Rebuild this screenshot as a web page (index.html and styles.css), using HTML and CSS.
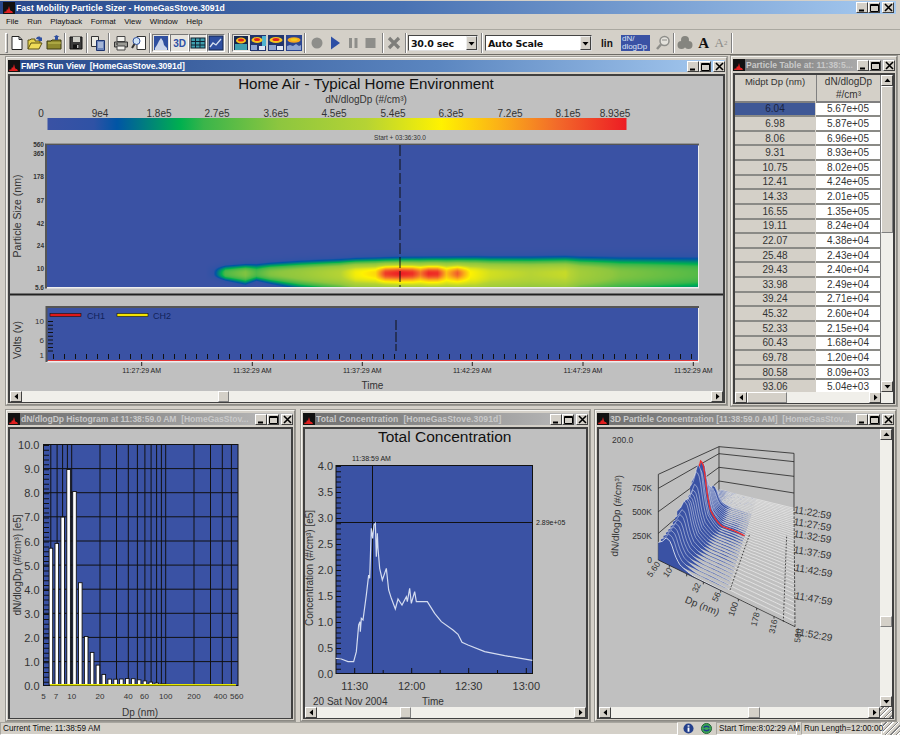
FILE: index.html
```html
<!DOCTYPE html>
<html lang="en">
<head>
<meta charset="utf-8">
<title>Fast Mobility Particle Sizer - HomeGasStove.3091d</title>
<link rel="stylesheet" href="styles.css">
</head>
<body>
<svg class="defs" width="0" height="0" aria-hidden="true">
  <defs>
    <symbol id="appicon" viewBox="0 0 12 12"><rect width="12" height="12" fill="#111"/><path d="M1 11l1-2 1 1 1-3 1 1 1-4 1 4 1 1 1 0 1 2z" fill="#e02020"/></symbol>
    <symbol id="wmin" viewBox="0 0 9 9"><rect x="1" y="6.5" width="5" height="2" fill="#000"/></symbol>
    <symbol id="wmax" viewBox="0 0 9 9"><path d="M.5 1.5h8v7h-8zM.5 2.5h8" fill="none" stroke="#000"/></symbol>
    <symbol id="wclose" viewBox="0 0 9 9"><path d="M1 1l7 7M8 1l-7 7" stroke="#000" stroke-width="1.6"/></symbol>
    <symbol id="aup" viewBox="0 0 7 7"><path d="M3.5 1.5L6.5 5H.5z" fill="#000"/></symbol>
    <symbol id="adn" viewBox="0 0 7 7"><path d="M3.5 5.5L.5 2h6z" fill="#000"/></symbol>
    <symbol id="alt" viewBox="0 0 7 7"><path d="M1.5 3.5L5 .5v6z" fill="#000"/></symbol>
    <symbol id="art" viewBox="0 0 7 7"><path d="M5.5 3.5L2 .5v6z" fill="#000"/></symbol>
    <symbol id="heat-a" viewBox="0 0 16 16"><rect width="16" height="16" fill="#22356e"/><rect x="12" y="1" width="4" height="10" fill="#4fb3d0"/><ellipse cx="7" cy="5" rx="5.500" ry="3" fill="#f7c41d"/><ellipse cx="7" cy="4.500" rx="3" ry="1.600" fill="#e02020"/><rect x="1" y="10" width="6" height="5" fill="#8ea4d0"/><rect x="9" y="11" width="6" height="4" fill="#dfe7f5"/></symbol>
    <symbol id="heat-b" viewBox="0 0 16 16"><rect width="16" height="16" fill="#22356e"/><ellipse cx="8" cy="5" rx="6.500" ry="3" fill="#f7c41d"/><ellipse cx="8" cy="4.500" rx="3.500" ry="1.600" fill="#e02020"/><rect x="1" y="10" width="7" height="5" fill="#8ea4d0"/><rect x="9" y="11" width="6" height="4" fill="#dfe7f5"/></symbol>
    <symbol id="heat-c" viewBox="0 0 16 16"><rect width="16" height="16" fill="#2b4590"/><ellipse cx="8" cy="5" rx="6.500" ry="2.800" fill="#f7a81d"/><ellipse cx="8" cy="4.500" rx="3.500" ry="1.300" fill="#f0d020"/><path d="M1 15V11l3-1 3 1 3-2 3 2 2-1v5z" fill="#8ea4d0"/></symbol>
  </defs>
</svg>

<div class="app">
  <header class="apptitle">
    <svg class="tico"><use href="#appicon"/></svg>
    <span class="tname">Fast Mobility Particle Sizer - HomeGasStove.3091d</span>
    <div class="wbtns">
      <button class="wbtn"><svg><use href="#wmin"/></svg></button>
      <button class="wbtn"><svg><use href="#wmax"/></svg></button>
      <button class="wbtn wclose"><svg><use href="#wclose"/></svg></button>
    </div>
  </header>

  <nav class="menu">
    <span>File</span><span>Run</span><span>Playback</span><span>Format</span><span>View</span><span>Window</span><span>Help</span>
  </nav>

  <div class="toolbar">
    <i class="grip"></i>
    <span class="tb"><svg viewBox="0 0 16 16"><path d="M3 1.5h7l3 3v10H3z" fill="#fff" stroke="#222"/><path d="M10 1.5v3h3" fill="none" stroke="#222"/></svg></span>
    <span class="tb"><svg viewBox="0 0 16 16"><path d="M1 14V5h2l1-1h4v2h5v2" fill="#e8d44d" stroke="#5c5214"/><path d="M1 14l3-6h11l-3 6z" fill="#f0dc58" stroke="#5c5214"/><path d="M9 4c1-3 4-3 5-1l1-1v4h-4l1-1c-1-1-2-1-3-1z" fill="#2f4f9f"/></svg></span>
    <span class="tb"><svg viewBox="0 0 16 16"><path d="M1 14V6h4l1-1h9v9z" fill="#8f8a2e" stroke="#3d3a10"/><path d="M2 8h13" stroke="#c8c458"/><path d="M9 5V2h-1.500l3-2 3 2H12v3z" fill="#2f4f9f"/></svg></span>
    <i class="sep"></i>
    <span class="tb"><svg viewBox="0 0 16 16"><path d="M2 2h12v12H2z" fill="#3c3c3c" stroke="#111"/><rect x="5" y="2" width="7" height="5" fill="#cfcfc8"/><rect x="5" y="9.500" width="6" height="4.500" fill="#111"/><rect x="9" y="10" width="1.500" height="3" fill="#bbb"/></svg></span>
    <i class="sep"></i>
    <span class="tb"><svg viewBox="0 0 16 16"><path d="M1.500 1.500h7v10h-7z" fill="#ecebe4" stroke="#333"/><path d="M6.500 5.500h8v10h-8z" fill="#6d86bb" stroke="#1e3570"/><path d="M8 8h5M8 10h5M8 12h5" stroke="#dfe6f2"/></svg></span>
    <i class="sep"></i>
    <span class="tb"><svg viewBox="0 0 16 16"><path d="M4 1.500h8v5H4z" fill="#f2f1ec" stroke="#444"/><path d="M1.500 7h13v5h-13z" fill="#9a9a94" stroke="#333"/><path d="M4 11h8v4H4z" fill="#f2f1ec" stroke="#444"/><path d="M3 9h2" stroke="#222"/></svg></span>
    <span class="tb"><svg viewBox="0 0 16 16"><path d="M6 1.500h8.500v13H6z" fill="#fff" stroke="#333"/><circle cx="5.500" cy="6" r="3.500" fill="#cfe3f5" stroke="#2f4f9f"/><path d="M3.500 9L1 13" stroke="#333" stroke-width="2"/></svg></span>
    <i class="sep"></i>
    <span class="tb tb-on"><svg viewBox="0 0 16 16"><rect x="1" y="1" width="14" height="14" fill="#2f4f9f"/><path d="M2 15V13l2-3 2-4 2-3 2 3 1 4 3 3v2z" fill="#c9d3e8"/></svg></span>
    <span class="tb tb-on tb-3d">3D</span>
    <span class="tb tb-on"><svg viewBox="0 0 16 16"><rect x="1" y="3" width="14" height="10" fill="#3f9fae" stroke="#123"/><path d="M5.500 3v10M10 3v10M1 6.500h14M1 10h14" stroke="#123"/></svg></span>
    <span class="tb tb-on"><svg viewBox="0 0 16 16"><rect x="1" y="1" width="14" height="14" fill="#2f4f9f" stroke="#14264e"/><path d="M2 12l3-4 3 2 5-6" fill="none" stroke="#d5dff0" stroke-width="1.300"/></svg></span>
    <i class="sep sep-w"></i>
    <span class="tb tb-on"><svg viewBox="0 0 16 16"><rect x="1" y="1" width="14" height="14" fill="#14264e"/><rect x="2" y="9" width="12" height="6" fill="#3f9fae"/><ellipse cx="8" cy="5.500" rx="5" ry="3" fill="#f7c41d"/><ellipse cx="8" cy="5" rx="3" ry="1.600" fill="#e02020"/></svg></span>
    <span class="tb tb-pull"><svg><use href="#heat-a"/></svg></span>
    <span class="tb"><svg><use href="#heat-b"/></svg></span>
    <span class="tb"><svg><use href="#heat-c"/></svg></span>
    <i class="sep"></i>
    <span class="tb"><svg viewBox="0 0 16 16"><circle cx="8" cy="8" r="5.500" fill="#8e8e8a"/></svg></span>
    <span class="tb"><svg viewBox="0 0 16 16"><path d="M4 1.500l9 6.500-9 6.500z" fill="#2d4fa5"/></svg></span>
    <span class="tb"><svg viewBox="0 0 16 16"><path d="M4 3h3v10H4zM9.500 3h3v10h-3z" fill="#8e8e8a"/></svg></span>
    <span class="tb"><svg viewBox="0 0 16 16"><rect x="2.500" y="3" width="10" height="10" fill="#8e8e8a"/></svg></span>
    <i class="sep"></i>
    <span class="tb"><svg viewBox="0 0 16 16"><path d="M3 3l10 10M13 3L3 13" stroke="#7e7e7a" stroke-width="3.200"/></svg></span>
    <i class="sep sep-n"></i>
    <div class="combo combo-time"><span>30.0 sec</span><b class="sbtn"><svg><use href="#adn"/></svg></b></div>
    <i class="sep sep-w"></i>
    <div class="combo combo-scale"><span>Auto Scale</span><b class="sbtn"><svg><use href="#adn"/></svg></b></div>
    <span class="tb tb-lin">lin</span>
    <span class="dlog">dN/<br>dlogDp</span>
    <span class="tb tb-find"><svg viewBox="0 0 16 16"><circle cx="9.500" cy="6" r="4.500" fill="#e4e2dc" stroke="#8e8e8a" stroke-width="1.500"/><path d="M6 9.500L2 14" stroke="#8e8e8a" stroke-width="2.500"/><path d="M7 5h5" stroke="#8e8e8a"/></svg></span>
    <i class="sep"></i>
    <span class="tb"><svg viewBox="0 0 16 16"><circle cx="8" cy="5" r="4" fill="#85857f"/><circle cx="4.500" cy="10" r="4" fill="#85857f"/><circle cx="11.500" cy="10" r="4" fill="#85857f"/></svg></span>
    <span class="tb tb-a">A</span>
    <span class="tb tb-a2">A<sup>2</sup></span>
    <i class="sep"></i>
  </div>

  <main class="workspace">

    <!-- Run view -->
    <section class="win win-run">
      <header class="tbar tbar-active tight">
        <svg class="tico"><use href="#appicon"/></svg><span class="tname">FMPS Run View&nbsp; [HomeGasStove.3091d]</span>
        <div class="wbtns"><button class="wbtn"><svg><use href="#wmin"/></svg></button><button class="wbtn"><svg><use href="#wmax"/></svg></button><button class="wbtn wclose"><svg><use href="#wclose"/></svg></button></div>
      </header>
      <div class="body">
        <div class="chart chart-run">
          <svg width="713" height="315" viewBox="10 76 713 315">
            <text class="t15" x="366" y="89" text-anchor="middle">Home Air - Typical Home Environment</text>
            <text class="t10" x="366" y="103" text-anchor="middle">dN/dlogDp (#/cm³)</text>
            <g class="t10" text-anchor="middle">
              <text x="41" y="117">0</text><text x="100" y="117">9e4</text><text x="159" y="117">1.8e5</text><text x="217" y="117">2.7e5</text><text x="276" y="117">3.6e5</text><text x="334" y="117">4.5e5</text><text x="393" y="117">5.4e5</text><text x="451" y="117">6.3e5</text><text x="510" y="117">7.2e5</text><text x="568" y="117">8.1e5</text><text x="615" y="117">8.93e5</text>
            </g>
            <defs>
              <linearGradient id="scale">
                <stop offset="0" stop-color="#3a52a4"/><stop offset=".08" stop-color="#2f52a5"/><stop offset=".12" stop-color="#0055a5"/><stop offset=".23" stop-color="#00b04f"/><stop offset=".27" stop-color="#3ab54a"/><stop offset=".4" stop-color="#8dc63f"/><stop offset=".55" stop-color="#b5d334"/><stop offset=".68" stop-color="#fff200"/><stop offset=".78" stop-color="#fbb117"/><stop offset=".88" stop-color="#f26a2a"/><stop offset="1" stop-color="#ed1c24"/>
              </linearGradient>
            </defs>
            <rect x="47.500" y="118" width="579" height="12" fill="url(#scale)"/>
            <text class="t6" x="400" y="140" text-anchor="middle">Start + 03:36:30.0</text>

            <rect x="46" y="143.500" width="653" height="145" fill="#eee"/>
            <path d="M46 288.500V144.500H699" fill="none" stroke="#555" stroke-width="2"/>
            <g class="t7b" text-anchor="end">
              <text x="44" y="147">560</text><text x="44" y="156">365</text><text x="44" y="179">178</text><text x="44" y="203">87</text><text x="44" y="226">42</text><text x="44" y="248">24</text><text x="44" y="271">10</text><text x="44" y="290">5.6</text>
            </g>
            <text class="t11" transform="translate(21 216) rotate(-90)" text-anchor="middle">Particle Size (nm)</text>

            <path d="M8 294.500H725" stroke="#222" stroke-width="2"/>

            <rect x="46" y="306.500" width="653" height="56" fill="#eee"/>
            <rect x="47" y="308" width="651" height="53" fill="#3a52a4"/>
            <path d="M46.500 362V307H699" fill="none" stroke="#555" stroke-width="2"/>
            <path d="M48 360.500H698" stroke="#e23a3a"/>
            <path d="M53 356.500H698" stroke="#111" stroke-width="5" stroke-dasharray="1 10"/>
            <path d="M50.500 321V354" stroke="#111" stroke-width="5" stroke-dasharray="1 2.700"/>
            <path d="M396 320V351" stroke="#111" stroke-dasharray="10 2"/>
            <rect x="50" y="313.500" width="31" height="3" fill="#e01818" stroke="#111" stroke-width=".6"/>
            <rect x="117" y="313.500" width="31" height="3" fill="#f4e400" stroke="#111" stroke-width=".6"/>
            <text class="tleg" x="87" y="319">CH1</text><text class="tleg" x="153" y="319">CH2</text>
            <g class="t8" text-anchor="end"><text x="44" y="324">10</text><text x="44" y="343">6</text><text x="44" y="358">1</text></g>
            <text class="t11" transform="translate(21 340) rotate(-90)" text-anchor="middle">Volts (v)</text>
            <path d="M141.700 362v4M252.300 362v4M362.300 362v4M472.300 362v4M583 362v4M693.300 362v4" stroke="#222"/>
            <g class="t7" text-anchor="middle">
              <text x="141.700" y="373">11:27:29 AM</text><text x="252.300" y="373">11:32:29 AM</text><text x="362.300" y="373">11:37:29 AM</text><text x="472.300" y="373">11:42:29 AM</text><text x="583" y="373">11:47:29 AM</text><text x="693.300" y="373">11:52:29 AM</text>
            </g>
            <text class="t10" x="372.500" y="389" text-anchor="middle">Time</text>
          </svg>
          <canvas id="heat" class="heat" width="651" height="142"></canvas>
          <svg class="heat" width="651" height="142" viewBox="47 145 651 142"><path d="M400 145V287" stroke="#111" stroke-dasharray="11 3"/></svg>
        </div>
        <div class="hscroll">
          <button class="sb"><svg><use href="#alt"/></svg></button>
          <div class="track"><i class="thumb thumb-run"></i></div>
          <button class="sb"><svg><use href="#art"/></svg></button>
        </div>
      </div>
    </section>

    <!-- Particle table -->
    <section class="win win-table">
      <header class="tbar tbar-idle wide">
        <svg class="tico"><use href="#appicon"/></svg><span class="tname">Particle Table at: 11:38:5...</span>
        <div class="wbtns"><button class="wbtn"><svg><use href="#wmin"/></svg></button><button class="wbtn"><svg><use href="#wmax"/></svg></button><button class="wbtn wclose"><svg><use href="#wclose"/></svg></button></div>
      </header>
      <div class="body body-table">
        <div class="ptable">
          <div class="th th1">Midpt Dp (nm)</div>
          <div class="th th2"><span>dN/dlogDp</span><span>#/cm³</span></div>
          <div class="c1 sel">6.04</div><div class="c2">5.67e+05</div>
          <div class="c1">6.98</div><div class="c2">5.87e+05</div>
          <div class="c1">8.06</div><div class="c2">6.96e+05</div>
          <div class="c1">9.31</div><div class="c2">8.93e+05</div>
          <div class="c1">10.75</div><div class="c2">8.02e+05</div>
          <div class="c1">12.41</div><div class="c2">4.24e+05</div>
          <div class="c1">14.33</div><div class="c2">2.01e+05</div>
          <div class="c1">16.55</div><div class="c2">1.35e+05</div>
          <div class="c1">19.11</div><div class="c2">8.24e+04</div>
          <div class="c1">22.07</div><div class="c2">4.38e+04</div>
          <div class="c1">25.48</div><div class="c2">2.43e+04</div>
          <div class="c1">29.43</div><div class="c2">2.40e+04</div>
          <div class="c1">33.98</div><div class="c2">2.49e+04</div>
          <div class="c1">39.24</div><div class="c2">2.71e+04</div>
          <div class="c1">45.32</div><div class="c2">2.60e+04</div>
          <div class="c1">52.33</div><div class="c2">2.15e+04</div>
          <div class="c1">60.43</div><div class="c2">1.68e+04</div>
          <div class="c1">69.78</div><div class="c2">1.20e+04</div>
          <div class="c1">80.58</div><div class="c2">8.09e+03</div>
          <div class="c1">93.06</div><div class="c2">5.04e+03</div>
        </div>
        <div class="vscroll">
          <button class="sb"><svg><use href="#aup"/></svg></button>
          <div class="track vtrack"><i class="thumb thumb-tablev"></i></div>
          <button class="sb"><svg><use href="#adn"/></svg></button>
        </div>
        <div class="hscroll">
          <button class="sb"><svg><use href="#alt"/></svg></button>
          <div class="track"><i class="thumb thumb-tableh"></i></div>
          <button class="sb"><svg><use href="#art"/></svg></button>
        </div>
      </div>
    </section>

    <!-- Histogram -->
    <section class="win win-hist">
      <header class="tbar tbar-idle tight">
        <svg class="tico"><use href="#appicon"/></svg><span class="tname">dN/dlogDp Histogram at 11:38:59.0 AM&nbsp; [HomeGasStov...</span>
        <div class="wbtns"><button class="wbtn"><svg><use href="#wmin"/></svg></button><button class="wbtn"><svg><use href="#wmax"/></svg></button><button class="wbtn wclose"><svg><use href="#wclose"/></svg></button></div>
      </header>
      <div class="body">
        <svg class="fill" width="281" height="288" viewBox="10 429 281 288">
          <rect x="43.500" y="444.500" width="194.500" height="241" fill="#3a52a4" stroke="#111"/>
          <path d="M43 468.600H238M43 492.700H238M43 516.800H238M43 541H238M43 565.100H238M43 589.200H238M43 613.300H238M43 637.400H238M43 661.600H238" stroke="#111"/>
          <path d="M50.800 445V685M57.100 445V685M62.600 445V685M67.400 445V685M71.700 445V685M100 445V685M116.500 445V685M128.300 445V685M137.400 445V685M144.900 445V685M151.100 445V685M156.600 445V685M161.400 445V685M165.700 445V685M194 445V685M210.500 445V685M222.300 445V685M231.400 445V685" stroke="#111"/>
          <path d="M46.500 445V686" stroke="#111" stroke-width="5" stroke-dasharray="1 3.830"/>
          <g id="bars"></g>
          <path d="M50 684.800H236" stroke="#e8e800" stroke-width="1.500"/>
          <g class="t11n" text-anchor="end">
            <text x="39.500" y="449">10.0</text><text x="39.500" y="473">9.0</text><text x="39.500" y="497">8.0</text><text x="39.500" y="521">7.0</text><text x="39.500" y="545.500">6.0</text><text x="39.500" y="569.500">5.0</text><text x="39.500" y="593.500">4.0</text><text x="39.500" y="617.500">3.0</text><text x="39.500" y="642">2.0</text><text x="39.500" y="666">1.0</text><text x="39.500" y="690">0.0</text>
          </g>
          <g class="t8" text-anchor="middle">
            <text x="43.500" y="699">5</text><text x="56" y="699">7</text><text x="71.700" y="699">10</text><text x="100" y="699">20</text><text x="128.300" y="699">40</text><text x="144.500" y="699">60</text><text x="165.700" y="699">100</text><text x="194" y="699">200</text><text x="220.500" y="699">400</text><text x="236.700" y="699">560</text>
          </g>
          <text class="t10" transform="translate(21 565) rotate(-90)" text-anchor="middle">dN/dlogDp (#/cm³) [e5]</text>
          <text class="t10" x="140" y="716" text-anchor="middle">Dp (nm)</text>
        </svg>
      </div>
    </section>

    <!-- Total concentration -->
    <section class="win win-total">
      <header class="tbar tbar-idle">
        <svg class="tico"><use href="#appicon"/></svg><span class="tname">Total Concentration&nbsp; [HomeGasStove.3091d]</span>
        <div class="wbtns"><button class="wbtn"><svg><use href="#wmin"/></svg></button><button class="wbtn"><svg><use href="#wmax"/></svg></button><button class="wbtn wclose"><svg><use href="#wclose"/></svg></button></div>
      </header>
      <div class="body">
        <svg class="fill-s" width="281" height="278" viewBox="305 429 281 278">
          <text class="t155" x="444.700" y="442" text-anchor="middle">Total Concentration</text>
          <text class="t7" x="371.500" y="460.500" text-anchor="middle">11:38:59 AM</text>
          <rect x="336" y="465.500" width="196.500" height="208" fill="#3a52a4" stroke="#111"/>
          <path d="M372.500 466V673M336 522.500H532" stroke="#111"/>
          <path d="M338.500 466V674" stroke="#111" stroke-width="5" stroke-dasharray="1 4.200"/>
          <path d="M354.700 668V674M411.700 668V674M468.700 668V674M526.300 668V674" stroke="#111"/>
          <path d="M383.200 670V674M440.200 670V674M497.500 670V674" stroke="#111"/>
          <g transform="translate(298 405) scale(.33333)">
            <polyline fill="none" stroke="#d5ddf0" stroke-width="3.600" points="113,760 130,762 150,770 167,770 175,740 182,660 186,650 187,680 190,640 195,645 205,570 212,510 215,520 220,370 224,400 228,360 232,355 235,455 238,385 240,430 245,490 253,525 265,490 272,555 280,580 292,612 300,582 312,600 325,575 328,590 335,550 340,595 350,560 355,590 365,590 388,590 410,625 430,650 465,675 480,688 492,712 510,720 560,740 620,752 703,766"/>
          </g>
          <g class="t11n" text-anchor="end">
            <text x="333" y="470">4.0</text><text x="333" y="496">3.5</text><text x="333" y="522">3.0</text><text x="333" y="548">2.5</text><text x="333" y="574">2.0</text><text x="333" y="600">1.5</text><text x="333" y="626">1.0</text><text x="333" y="652">0.5</text><text x="333" y="678">0.0</text>
          </g>
          <text class="t7" x="536" y="524.500">2.89e+05</text>
          <g class="t11n" text-anchor="middle">
            <text x="354.700" y="689.500">11:30</text><text x="411.700" y="689.500">12:00</text><text x="468.700" y="689.500">12:30</text><text x="526.300" y="689.500">13:00</text>
          </g>
          <text class="t10" transform="translate(313 568) rotate(-90)" text-anchor="middle">Concentration (#/cm³) [e5]</text>
          <text class="t10" x="313" y="704.500">20 Sat Nov 2004</text>
          <text class="t10" x="433" y="704.500" text-anchor="middle">Time</text>
        </svg>
        <div class="hscroll">
          <button class="sb"><svg><use href="#alt"/></svg></button>
          <div class="track"><i class="thumb thumb-total"></i></div>
          <button class="sb"><svg><use href="#art"/></svg></button>
        </div>
      </div>
    </section>

    <!-- 3D -->
    <section class="win win-3d">
      <header class="tbar tbar-idle tight">
        <svg class="tico"><use href="#appicon"/></svg><span class="tname">3D Particle Concentration [11:38:59.0 AM]&nbsp; [HomeGasStov...</span>
        <div class="wbtns"><button class="wbtn"><svg><use href="#wmin"/></svg></button><button class="wbtn"><svg><use href="#wmax"/></svg></button><button class="wbtn wclose"><svg><use href="#wclose"/></svg></button></div>
      </header>
      <div class="body body-3d">
        <svg width="281" height="278" viewBox="599 429 281 278">
          <g transform="translate(590 405) scale(.33333)">
            <g fill="none" stroke="#222" stroke-width="2.400">
              <path d="M205 465V208L387 125L612 145V310M387 125V258"/>
              <path d="M205 250L387 146L612 170M205 320L387 187L612 214M205 385L387 228L612 264"/>
            </g>
            <g id="ridges"></g>
            <g fill="none" stroke="#222" stroke-width="2.400">
              <path d="M205 465L615 665"/>
              <path d="M612 310L615 665" stroke-dasharray="8 4"/>
              <path d="M420 555L480 385M580 650L590 390" stroke-dasharray="5 5"/>
              <path d="M238 481v7M290 507v7M340 531v7M392 556v7M445 582v7M500 609v7M552 634v7"/>
            </g>
          </g>
          <text class="t85" x="612" y="443">200.0</text>
          <g class="t85" text-anchor="end"><text x="652" y="491">750K</text><text x="652" y="515">500K</text><text x="652" y="539">250K</text><text x="652" y="563">0</text></g>
          <text class="t10" transform="translate(620 516) rotate(-87)" text-anchor="middle">dN/dlogDp (#/cm³)</text>
          <g class="t85" text-anchor="middle">
            <text transform="translate(656 571) rotate(-55)">5.60</text>
            <text transform="translate(670 574) rotate(-55)">10</text>
            <text transform="translate(699 589) rotate(-65)">32</text>
            <text transform="translate(719 598) rotate(-65)">56</text>
            <text transform="translate(736 610) rotate(-70)">100</text>
            <text transform="translate(758 620) rotate(-75)">178</text>
            <text transform="translate(776 627) rotate(-78)">316</text>
            <text transform="translate(801 636) rotate(-82)">560</text>
          </g>
          <text class="t10" transform="translate(701 609) rotate(22)" text-anchor="middle">Dp (nm)</text>
          <g class="t10" text-anchor="middle">
            <text transform="translate(812 516) rotate(10)">11:22:59</text>
            <text transform="translate(812 528) rotate(10)">11:27:59</text>
            <text transform="translate(812 540) rotate(10)">11:32:59</text>
            <text transform="translate(812 556) rotate(10)">11:37:59</text>
            <text transform="translate(813 574) rotate(10)">11:42:59</text>
            <text transform="translate(813 602) rotate(10)">11:47:59</text>
            <text transform="translate(813 638) rotate(10)">11:52:29</text>
          </g>
        </svg>
        <div class="vscroll">
          <button class="sb"><svg><use href="#aup"/></svg></button>
          <div class="track vtrack"><i class="thumb thumb-3dv"></i></div>
          <button class="sb"><svg><use href="#adn"/></svg></button>
        </div>
        <div class="hscroll">
          <button class="sb"><svg><use href="#alt"/></svg></button>
          <div class="track"><i class="thumb thumb-3dh"></i></div>
          <button class="sb"><svg><use href="#art"/></svg></button>
        </div>
        <i class="corner"></i>
      </div>
    </section>
  </main>

  <footer class="status">
    <span class="st-main">Current Time: 11:38:59 AM</span>
    <span class="st-ico"><svg viewBox="0 0 12 12"><circle cx="6" cy="6" r="5.500" fill="#24408c"/><rect x="5" y="5" width="2" height="4.500" fill="#fff"/><rect x="5" y="2.500" width="2" height="1.500" fill="#fff"/></svg></span>
    <span class="st-ico"><svg viewBox="0 0 12 12"><circle cx="6" cy="6" r="5.500" fill="#3aa655" stroke="#1d5c30"/><path d="M3 5c1-2 5-2 6 0M9 7c-1 2-5 2-6 0" fill="none" stroke="#1f3c8c" stroke-width="1.500"/></svg></span>
    <span class="st-p st-start">Start Time:8:02:29 AM</span>
    <span class="st-p st-run">Run Length=12:00:00</span>
    <i class="corner"></i>
  </footer>
</div>
<script src="charts.js"></script>
</body>
</html>
```

FILE: styles.css
```css
* { box-sizing: border-box; }
html, body { margin: 0; padding: 0; width: 900px; height: 735px; overflow: hidden; background: #d4d0c8; }
body { font: 10px "Liberation Sans", Arial, sans-serif; color: #222; }
.defs { position: absolute; }
button { padding: 0; margin: 0; font: inherit; }
svg { display: block; overflow: visible; }
.app { width: 900px; height: 735px; padding-top: 1px; display: flex; flex-direction: column; }

/* title bars */
.apptitle, .tbar { display: flex; align-items: center; flex: none; font: bold 8.6px "Liberation Sans", sans-serif; letter-spacing: .1px; }
.apptitle { height: 13px; margin: 0 4px 0 0; color: #fff; padding: 0 2px 0 3px; letter-spacing: .04px; background: linear-gradient(90deg, #27478a 0, #4a73b3 45%, #a6caf0 100%); }
.tbar { height: 12px; margin-bottom: 2px; }
.tight { letter-spacing: -.05px; }
.wide { letter-spacing: 0; }
.tbar-active { color: #fff; background: linear-gradient(90deg, #27478a 0, #5b86c0 60%, #a6caf0 100%); }
.tbar-idle { color: #c9c9c9; background: linear-gradient(90deg, #6f6f6f 0, #8a8a8a 40%, #bdbdbd 100%); }
.tico { width: 12px; height: 12px; flex: none; margin-right: 1px; }
.tname { flex: 1; white-space: nowrap; overflow: hidden; }
.wbtns { display: flex; flex: none; gap: 0; margin-left: 2px; }
.wbtn { width: 12px; height: 11px; border: 1px solid; border-color: #fff #404040 #404040 #fff; background: #d4d0c8; display: flex; align-items: center; justify-content: center; }
.wbtn svg { width: 9px; height: 9px; }
.wclose { margin-left: 2px; }

/* menu */
.menu { height: 15px; flex: none; display: flex; align-items: center; gap: 8.5px; padding: 0 0 0 6px; color: #111; font: 7.9px "Liberation Sans", sans-serif; }

/* toolbar */
.toolbar { height: 26px; flex: none; display: flex; align-items: center; padding: 2px 0 0 5px; border-top: 1px solid #aaa8a0; border-bottom: 1px solid #6e6c66; }
.grip { width: 3px; height: 20px; border: 1px solid; border-color: #fff #808080 #808080 #fff; flex: none; }
.sep { width: 2px; height: 20px; border-left: 1px solid #808080; border-right: 1px solid #fff; margin: 0 1px; flex: none; }
.sep-w { margin: 0 2px 0 3px; }
.sep-n { margin: 0 1px 0 2px; }
.tb { width: 18.3px; height: 18px; flex: none; display: flex; align-items: center; justify-content: center; }
.tb svg { width: 16px; height: 16px; }
.tb-pull { margin-left: -2px; }
.tb-on { background: #e6e4de; border: 1px solid; border-color: #777 #fff #fff #777; }
.tb-3d { font: bold 10px "Liberation Sans", sans-serif; color: #2d4fa5; }
.tb-lin { width: 24px; margin-left: 3px; font: bold 10px "Liberation Sans", sans-serif; color: #111; }
.tb-find { margin-left: 3px; }
.tb-a { font: bold 15px "Liberation Serif", serif; color: #111; }
.tb-a2 { font: 13px "Liberation Serif", serif; color: #8a8a86; margin-left: -1px; }
.tb-a2 sup { font-size: 7px; }
.dlog { width: 29px; height: 16px; flex: none; margin: 0 1px 0 2px; background: #3a52a4; color: #dbe3f4; font: 8px/8px "Liberation Sans", sans-serif; padding-left: 1px; }
.combo { height: 16px; flex: none; background: #fff; border: 1px solid; border-color: #444 #ddd #ddd #444; display: flex; align-items: center; justify-content: space-between; font: bold 9.5px "DejaVu Sans", sans-serif; letter-spacing: -.2px; color: #111; padding-left: 2px; }
.combo-time { width: 70px; }
.combo-scale { width: 107px; }
.sbtn { width: 11px; height: 14px; background: #d4d0c8; border: 1px solid; border-color: #eee #404040 #404040 #eee; display: flex; align-items: center; justify-content: center; }
.sbtn svg { width: 7px; height: 7px; }

/* desktop */
.workspace { flex: 1; position: relative; }
.win { position: absolute; padding: 2px 1px 1px; background: #d4d0c8; border: 1px solid #8c8a84; border-top-color: #f4f3ef; border-left-color: #f4f3ef; outline: 1px solid #9a9892; display: flex; flex-direction: column; }
.win-run { left: 6px; top: 2px; width: 721px; height: 348px; }
.win-table { left: 731px; top: 1px; width: 166px; height: 350px; }
.win-hist { left: 6px; top: 355px; width: 289px; height: 311px; }
.win-total { left: 301px; top: 355px; width: 289px; height: 311px; }
.win-3d { left: 595px; top: 355px; width: 301px; height: 311px; }
.body { flex: 1; min-height: 0; background: #c0c0c0; border: 2px solid #404040; border-bottom-width: 1px; display: flex; flex-direction: column; }
.chart-run { position: relative; flex: 1; overflow: hidden; }
.heat { position: absolute; left: 37px; top: 69px; }
.fill { flex: none; }
.fill-s { flex: none; }

/* charts */
.t15 { font: 15.1px "Liberation Sans", sans-serif; fill: #111; }
.t155 { font: 15.5px "Liberation Sans", sans-serif; fill: #111; }
.t11 { font: 10.5px "Liberation Sans", sans-serif; fill: #333; }
.t11n { font: 11px "Liberation Sans", sans-serif; fill: #333; }
.t10 { font: 10px "Liberation Sans", sans-serif; fill: #333; }
.t85 { font: 8.5px "Liberation Sans", sans-serif; fill: #333; }
.t8 { font: 8px "Liberation Sans", sans-serif; fill: #333; }
.t7 { font: 7px "Liberation Sans", sans-serif; fill: #222; }
.t7b { font: bold 6.5px "Liberation Sans", sans-serif; fill: #333; }
.t6 { font: 6.5px "Liberation Sans", sans-serif; fill: #333; }
.tleg { font: 9px "Liberation Sans", sans-serif; fill: #12225a; }

/* scrollbars */
.hscroll { flex: none; height: 11px; display: flex; background: #f0efea; }
.vscroll { display: flex; flex-direction: column; background: #f0efea; }
.sb { width: 12px; height: 11px; flex: none; background: #d4d0c8; border: 1px solid; border-color: #fff #404040 #404040 #fff; display: flex; align-items: center; justify-content: center; }
.sb svg { width: 7px; height: 7px; }
.track { flex: 1; min-width: 0; min-height: 0; display: flex; }
.vtrack { flex-direction: column; }
.thumb { display: block; flex: none; background: #d4d0c8; border: 1px solid; border-color: #fff #808080 #808080 #fff; }
.thumb-run { width: 11px; margin-left: 196px; }
.thumb-tableh { width: 40px; margin-left: 0; }
.thumb-tablev { height: 147px; width: 100%; }
.thumb-total { width: 11px; margin-left: 83px; }
.thumb-3dh { width: 12px; margin-left: 137px; }
.thumb-3dv { height: 11px; width: 100%; margin-top: 176px; }

/* table */
.body-table { display: grid; grid-template-columns: 1fr 12px; grid-template-rows: 1fr 11px; background: #f0efea; }
.body-table .hscroll { grid-column: 1 / 2; }
.ptable { display: grid; grid-template-columns: 80px 65px; grid-template-rows: 27.5px; grid-auto-rows: 14.63px; column-gap: 1px; overflow: hidden; font: 10px "Liberation Sans", sans-serif; color: #333; background: #d4d0c8; }
.th { background: #d4d0c8; border-bottom: 2px solid #808080; text-align: center; }
.th1 { padding-top: 1px; font-size: 9.5px; }
.th2 { display: flex; flex-direction: column; border-left: 1px solid #808080; border-right: 1px solid #808080; }
.th2 span { flex: 1; display: flex; align-items: center; justify-content: center; }
.c1, .c2 { border-bottom: 2px solid #8a8a86; display: flex; align-items: center; justify-content: center; }
.c1 { background: #d4d0c8; }
.c2 { background: #fff; border-right: 1px solid #808080; }
.c1.sel { background: #3f5896; color: #1a2340; }

/* 3D */
.body-3d { display: grid; grid-template-columns: 281px 12px; grid-template-rows: 278px 11px; }
.corner { display: block; background: repeating-linear-gradient(135deg, #d4d0c8 0 2px, #808080 2px 3px, #fff 3px 4px); }

/* status */
.status { height: 13px; flex: none; display: flex; align-items: stretch; gap: 1px; font: 8.2px "Liberation Sans", sans-serif; color: #111; }
.st-main { flex: 1; padding-left: 2px; border: 1px solid; border-color: #a8a69f #fff #fff #a8a69f; line-height: 11px; margin-right: 1px; }
.st-ico { width: 17px; flex: none; display: flex; align-items: center; justify-content: center; }
.st-ico svg { width: 11px; height: 11px; }
.st-p { flex: none; border: 1px solid; border-color: #a8a69f #fff #fff #a8a69f; padding-left: 2px; line-height: 11px; white-space: nowrap; }
.st-start { width: 81px; margin-right: 3px; }
.st-run { width: 81px; }
.status .corner { width: 17px; flex: none; }
```

FILE: charts.js
```javascript
(function () {
  var NS = "http://www.w3.org/2000/svg";

  function lerpTable(tab, x) {
    if (x <= tab[0][0]) return tab[0][1];
    for (var i = 1; i < tab.length; i++) {
      if (x <= tab[i][0]) {
        var a = tab[i - 1], b = tab[i];
        return a[1] + (b[1] - a[1]) * (x - a[0]) / (b[0] - a[0]);
      }
    }
    return tab[tab.length - 1][1];
  }

  // Amplitude of the hot band along the time axis (page x).
  var AMP = [[47, 0], [205, 0], [213, .08], [225, .3], [245, .38], [256, .3], [270, .38], [300, .44], [340, .55], [355, .66], [375, .72], [385, .95], [400, 1], [412, .97], [420, .86], [428, .98], [437, .97], [446, .76], [457, .9], [470, .68], [490, .6], [530, .55], [565, .58], [580, .48], [620, .38], [698, .31]];
  var SCALE = [[0, [58, 82, 164]], [.08, [47, 82, 165]], [.12, [0, 85, 165]], [.23, [0, 176, 79]], [.27, [58, 181, 74]], [.4, [141, 198, 63]], [.55, [181, 211, 52]], [.68, [255, 242, 0]], [.78, [251, 177, 23]], [.88, [242, 106, 42]], [1, [237, 28, 36]]];

  function colour(v) {
    v = Math.max(0, Math.min(1, v));
    for (var i = 1; i < SCALE.length; i++) {
      if (v <= SCALE[i][0]) {
        var a = SCALE[i - 1], b = SCALE[i], k = (v - a[0]) / (b[0] - a[0]);
        return [0, 1, 2].map(function (c) { return a[1][c] + (b[1][c] - a[1][c]) * k; });
      }
    }
    return SCALE[SCALE.length - 1][1];
  }

  // Heat map
  var ctx = document.getElementById("heat").getContext("2d");
  var img = ctx.createImageData(651, 142);
  for (var j = 0; j < 142; j++) {
    for (var i = 0; i < 651; i++) {
      var x = 47 + i, y = 145 + j, dy = y - 273;
      var A = lerpTable(AMP, x);
      var up = lerpTable([[213, 7], [300, 11], [400, 13], [698, 15]], x);
      var dn = lerpTable([[213, 5], [245, 10], [256, 7], [300, 14], [350, 18], [430, 24], [560, 22], [698, 18]], x);
      var base = Math.min(A, .66);
      var hot = A - base;
      var s = dy < 0 ? up : dn;
      var v = base * Math.exp(-Math.pow(Math.abs(dy / s), 2.5)) + hot * Math.exp(-Math.pow(dy / 7.5, 2));
      var c = colour(v), p = (j * 651 + i) * 4;
      img.data[p] = c[0]; img.data[p + 1] = c[1]; img.data[p + 2] = c[2]; img.data[p + 3] = 255;
    }
  }
  ctx.putImageData(img, 0, 0);

  // Size spectrum at the peak time (from the particle table), in units of 1e5.
  var DP = [6.04, 6.98, 8.06, 9.31, 10.75, 12.41, 14.33, 16.55, 19.11, 22.07, 25.48, 29.43, 33.98, 39.24, 45.32, 52.33, 60.43, 69.78, 80.58, 93.06, 107.5, 124.1];
  var VAL = [5.67, 5.87, 6.96, 8.93, 8.02, 4.24, 2.01, 1.35, .824, .438, .243, .24, .249, .271, .26, .215, .168, .12, .0809, .0504, .03, .02];

  // Histogram bars
  var bars = document.getElementById("bars");
  DP.forEach(function (d, n) {
    var cx = 71.7 + 94 * Math.log10(d / 10), h = VAL[n] * 24.13;
    var r = document.createElementNS(NS, "rect");
    r.setAttribute("x", (cx - 2).toFixed(1));
    r.setAttribute("y", (685 - h).toFixed(1));
    r.setAttribute("width", "3.6");
    r.setAttribute("height", Math.max(h, .5).toFixed(1));
    r.setAttribute("fill", "#fff");
    r.setAttribute("stroke", "#111");
    r.setAttribute("stroke-width", ".9");
    bars.appendChild(r);
  });

  // 3D ridges, in coordinates of the chart group
  var shapeTab = DP.map(function (d, n) { return [Math.log10(d / 5.6) / 2 - .05, VAL[n] / 8.93]; });
  shapeTab.push([.62, .008], [1, .004]);
  var ridges = document.getElementById("ridges");
  var COUNT = 41, LEAN = 3.5;
  function ridgeAt(s) {
    var t = (Math.pow(LEAN, s) - 1) / (LEAN - 1);
    var lx = 387 - 182 * t, ly = 255 + 210 * t, rx = 612 + 3 * t, ry = 310 + 355 * t;
    var H = (113 + 102 * t) * 893 / 750;
    var amp = Math.max(lerpTable(AMP, 47 + 651 * s), .015);
    var line = [], base = [];
    for (var n = 0; n <= 70; n++) {
      var u = n / 70;
      var bx = lx + (rx - lx) * u, by = ly + (ry - ly) * u;
      line.push([bx, by - H * amp * lerpTable(shapeTab, u)]);
      base.push([bx, by]);
    }
    return { line: line, base: base };
  }
  function str(pts) { return pts.map(function (p) { return p[0].toFixed(1) + "," + p[1].toFixed(1); }).join(" "); }
  function add(tag, attrs) {
    var el = document.createElementNS(NS, tag);
    Object.keys(attrs).forEach(function (k) { el.setAttribute(k, attrs[k]); });
    ridges.appendChild(el);
  }
  var RED = Math.round(.54 * (COUNT - 1)), CUT = 36;
  for (var k = 0; k < COUNT; k++) {
    var s = k / (COUNT - 1), r = ridgeAt(s);
    var head = r.line.slice(0, CUT), floor = r.base.slice(0, CUT).reverse();
    add("polygon", { points: str(head.concat(floor)), fill: "#3a52a4", stroke: "none" });
    add("polyline", { points: str(head), fill: "none", stroke: "#f4f6fb", "stroke-width": k === COUNT - 1 ? 2.4 : 1.4 });
    add("polyline", { points: str(r.line.slice(CUT - 1)), fill: "none", stroke: "#f8f8f8", "stroke-width": 1.8 });
    if (k === RED) {
      add("polyline", { points: str(head.slice(1)), fill: "none", stroke: "#ef2b2b", "stroke-width": 4 });
    }
  }
})();
```
